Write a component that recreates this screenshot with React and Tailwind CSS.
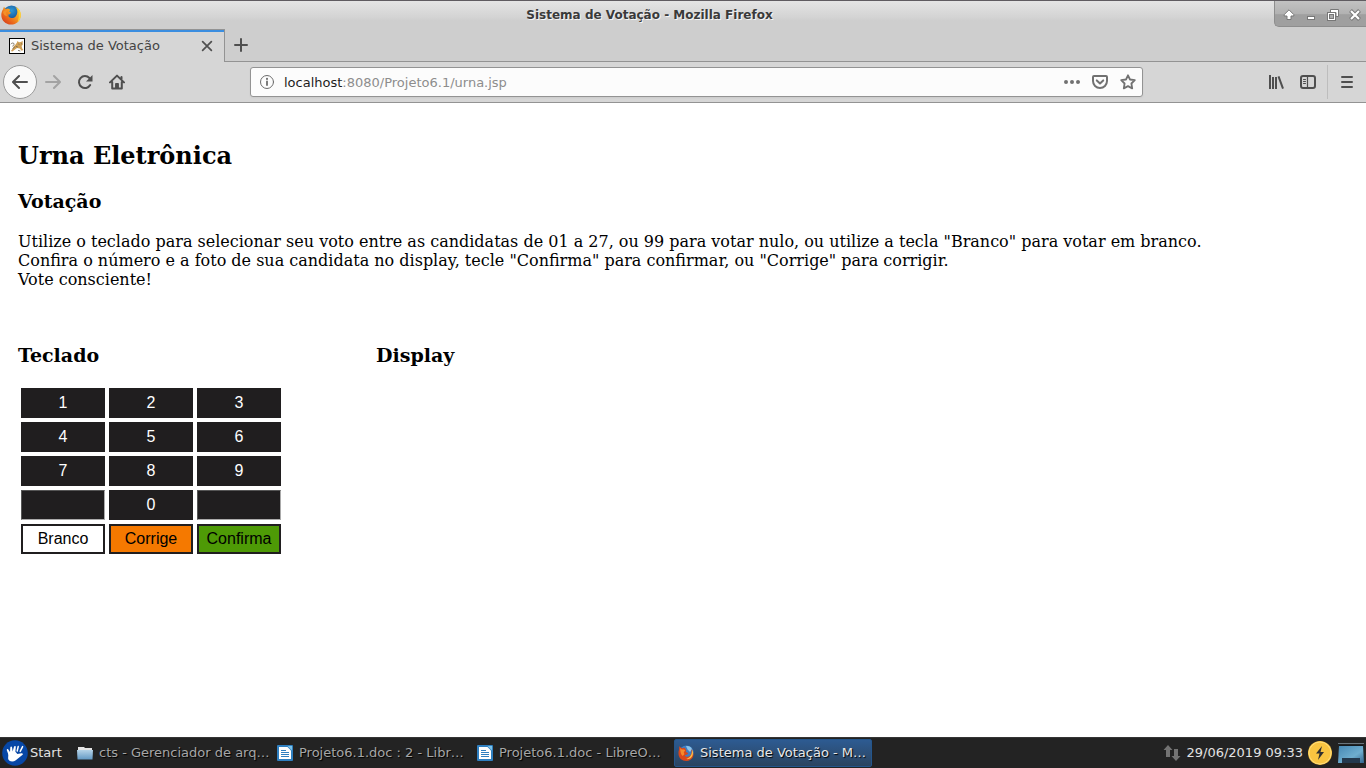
import React from "react";

function FirefoxLogo({ className }) {
  return (
    <svg className={className} viewBox="0 0 20 20" aria-hidden="true">
      <defs>
        <radialGradient id="fxGlobe" cx="50%" cy="30%" r="65%">
          <stop offset="0" stopColor="#2f9bd8" />
          <stop offset="1" stopColor="#0f3f86" />
        </radialGradient>
        <linearGradient id="fxFox" x1="1" y1="0" x2="0" y2="1">
          <stop offset="0" stopColor="#ffe14a" />
          <stop offset="0.35" stopColor="#f8a521" />
          <stop offset="0.7" stopColor="#e8601c" />
          <stop offset="1" stopColor="#c9301a" />
        </linearGradient>
      </defs>
      <circle cx="10.5" cy="9" r="8.6" fill="url(#fxGlobe)" />
      <path
        d="M2 4.2 3 1.8 4.6 4 7 3.6 9.3 4.8 8.2 6.6 10 7.8 8.4 9.4 7.4 9.6 7.6 11.6C9.2 13.6 12.6 13.6 14.6 11.4 16.4 9.2 16.8 6.4 15.8 4.2 15.4 3.2 15 2.6 14.4 2 18 3 19.8 6.4 19.8 10 19.8 15.6 15.4 19.6 10 19.6 4.6 19.6.3 15.4.3 10 .3 7.8 1 5.8 2 4.2Z"
        fill="url(#fxFox)"
      />
      <path d="M16.8 3.4C18.8 5 19.8 7.4 19.8 10c0 3-1.4 5.8-3.4 7.4C18 14 18.6 8 16.8 3.4Z" fill="#fbd23c" />
      <path d="M2 7.2c1-1.6 2.6-2.2 4.4-1.6L5.2 7.8 6 11c-2-.2-3.4-1.6-4-3.8Z" fill="#f5902a" />
    </svg>
  );
}

function FirefoxClassicLogo() {
  return (
    <svg className="size-4 shrink-0" viewBox="0 0 16 16" aria-hidden="true">
      <circle cx="8.4" cy="7.6" r="7.2" fill="#3f7fc4" />
      <path d="M8 1.2c2.6-.6 5 .6 6 3L12 7 9.6 4.4Z" fill="#8cc4ea" />
      <path d="M1.2 1.2 3.8 3.2l2.8-.4 1.8 2.4-.6 1.6 2.6 1.4-1.6 1.6-2 .4c.8 1.8 3.4 2 5 .8 2-1.6 2.2-4.4 1.2-7 2.4 2.2 3 5.4 2 8-1 2.400-3.600 3.900-6.600 3.900C4 15.900.500 13 .500 8.400c0-1.600.100-2.600.600-3.600Z" fill="#d9481c" />
      <path d="m2.200 3 1.600 1.600 2.400-.2 1 1.400L5.800 7l.6 2.200L4.600 11C3 9.600 2 6.600 2.200 3Z" fill="#f58a2c" />
      <path d="M14.200 4.600c1.400 2.800 1 6-1 8-1.400 1.400-3.400 1.800-5 1.400 3.600-.8 6.200-4.400 6-9.400Z" fill="#fbc34a" />
    </svg>
  );
}

function TomcatIcon() {
  return (
    <svg className="size-4 shrink-0" viewBox="0 0 16 16" aria-hidden="true">
      <rect x="0.5" y="0.5" width="15" height="15" fill="#fff" stroke="#000" />
      <path d="M8 4.400 8.400 3 10 4.200 12 4 13.600 2.800 13.800 6.400 12.600 8 13.200 10.400 14.400 12 12.600 12.800 10.800 10.400 8 10 6 11.600 3.400 13.400 1.800 13 3.800 10.800 4.600 8.600 6.400 6.800Z" fill="#d0a055" />
      <path d="M1.800 6.200C2.800 4.600 5 4.600 5.200 6.200L3.600 8.400M3.400 10.800l2.400-1.800M6.800 8.400l2 .6M9.400 6l1 .4M12 5.800h1M9 12.400l2.400.6" fill="none" stroke="#6d6352" strokeWidth="0.8" />
    </svg>
  );
}

function Icon({ children, className = "size-4 text-[#4f4f4f]", width = 2 }) {
  return (
    <svg
      className={className}
      viewBox="0 0 16 16"
      fill="none"
      stroke="currentColor"
      strokeWidth={width}
      strokeLinecap="round"
      strokeLinejoin="round"
      aria-hidden="true"
    >
      {children}
    </svg>
  );
}

function ToolButton({ label, children }) {
  return (
    <button type="button" aria-label={label} className="flex size-8 shrink-0 items-center justify-center">
      {children}
    </button>
  );
}

function TitleBar() {
  return (
    <header className="flex h-[29px] items-start border-t border-[#5f5b60] bg-linear-to-b from-[#e4e4e4] from-0% via-[#d3d3d3] via-60% to-[#cecece] to-70%">
      <FirefoxLogo className="mt-1 ml-px size-5 shrink-0" />
      <h1 className="flex-1 pl-1 text-center text-[12px] leading-7 font-bold text-[#3a3a3a] [text-shadow:1px_1px_0_#f5f5f5]">
        Sistema de Votação - Mozilla Firefox
      </h1>
      <div className="flex h-[26px] w-[92px] shrink-0 items-center justify-between rounded-bl-[5px] border-b border-l border-[#8d8d8d] bg-linear-to-b from-[#c2c2c2] from-0% via-[#b2b2b2] via-50% to-[#9f9f9f] to-55% pt-0.5 pl-[3px]">
        <button type="button" aria-label="Enrolar" className="flex size-[22px] items-center justify-center">
          <svg className="size-3" viewBox="0 0 12 12" aria-hidden="true">
            <path d="M6 .8 10.800 5.600V7H8V10.500H4V7H1.200V5.600Z" fill="#fff" stroke="#777" />
          </svg>
        </button>
        <button type="button" aria-label="Minimizar" className="flex size-[22px] items-center justify-center">
          <svg className="size-3" viewBox="0 0 12 12" aria-hidden="true">
            <rect x="2.5" y="7.5" width="7" height="3" fill="#fff" stroke="#777" />
          </svg>
        </button>
        <button type="button" aria-label="Restaurar" className="flex size-[22px] items-center justify-center">
          <svg className="size-3" viewBox="0 0 12 12" aria-hidden="true">
            <path d="M3.5.5h8v7H9v-4H3.5Z" fill="#fff" stroke="#777" />
            <rect x="0.5" y="3.5" width="8" height="8" fill="#fff" stroke="#777" />
            <rect x="2.5" y="5.5" width="4" height="4" fill="#aaa" stroke="#777" />
          </svg>
        </button>
        <button type="button" aria-label="Fechar" className="flex size-[22px] items-center justify-center">
          <svg className="size-3" viewBox="0 0 12 12" aria-hidden="true">
            <path d="m1.500 1.500 9 9m0-9-9 9" stroke="#777" strokeWidth="4" />
            <path d="m2 2 8 8m0-8-8 8" stroke="#fff" strokeWidth="2.200" />
          </svg>
        </button>
      </div>
    </header>
  );
}

function TabStrip() {
  return (
    <div className="flex h-[33px] bg-[#cecece]">
      <div className="flex w-[225px] items-stretch border-t border-r border-[#939393] bg-[#d6d6d6]">
        <div className="flex w-full items-center border-t-2 border-[#3b8ee0] pr-2 pb-0.5 pl-[9px]">
          <TomcatIcon />
          <span className="flex-1 pl-1.5 text-[13px] leading-4 text-[#444]">Sistema de Votação</span>
          <button type="button" aria-label="Fechar aba" className="flex size-[18px] items-center justify-center">
            <Icon className="size-[14px] text-[#505050]" width={2}>
              <path d="m3 3 10 10M13 3 3 13" />
            </Icon>
          </button>
        </div>
      </div>
      <div className="flex flex-1 items-center border-b border-[#939393]">
        <button type="button" aria-label="Nova aba" className="flex size-8 items-center justify-center">
          <Icon>
            <path d="M8 2v12M2 8h12" />
          </Icon>
        </button>
      </div>
    </div>
  );
}

function NavBar() {
  return (
    <div className="flex h-[41px] items-center border-b border-[#939393] bg-[#d6d6d6] pl-[3px]">
      <button
        type="button"
        aria-label="Voltar"
        className="flex size-[34px] shrink-0 items-center justify-center rounded-full border border-[#9b9b9b] bg-[#f9f9f9]"
      >
        <Icon>
          <path d="M15 8H1.500M7 2 1 8l6 6" />
        </Icon>
      </button>
      <ToolButton label="Avançar">
        <Icon className="size-4 text-[#a3a3a3]">
          <path d="M1 8h13.500M9 2l6 6-6 6" />
        </Icon>
      </ToolButton>
      <ToolButton label="Recarregar">
        <Icon>
          <path d="M13.200 11A6 6 0 1 1 12.400 4" />
          <path d="M15.500 1V7.500H9Z" fill="currentColor" stroke="none" />
        </Icon>
      </ToolButton>
      <ToolButton label="Página inicial">
        <Icon>
          <path d="M1 8.400 8 1.600l7 6.800M3.200 8v6.400h9.600V8M12.500 3v2" />
          <path d="M6.600 14V9.500h2.800V14" fill="currentColor" strokeWidth="1" />
        </Icon>
      </ToolButton>

      <div className="mx-[117px] flex h-[30px] min-w-0 flex-1 items-center rounded-[3px] border border-[#939393] bg-[#fcfcfc] pr-1.5 pl-2 shadow-xs">
        <Icon className="size-4 shrink-0 text-[#6c6c6c]" width={1}>
          <circle cx="8" cy="8" r="6.5" />
          <path d="M8 7.500V11" strokeWidth="1.8" />
          <path d="M8 4.800v.1" strokeWidth="2" />
        </Icon>
        <a href="#urna" aria-label="Endereço" className="min-w-0 flex-1 truncate pt-0.5 pl-[9px] text-[13px] leading-4 text-[#8d8d8d]">
          <span className="text-[#1c1c1c]">localhost</span>:8080/Projeto6.1/urna.jsp
        </a>
        <div className="flex items-center gap-3">
          <button type="button" aria-label="Ações da página">
            <Icon className="size-4 text-[#717171]" width={4}>
              <path d="M2 8h.01M8 8h.01M14 8h.01" />
            </Icon>
          </button>
          <button type="button" aria-label="Salvar no Pocket">
            <Icon className="size-4 text-[#717171]">
              <path d="M2 2h12a1 1 0 0 1 1 1v4A7 7 0 0 1 1 7V3a1 1 0 0 1 1-1Z" />
              <path d="m4.800 6.400 3.200 3 3.200-3" />
            </Icon>
          </button>
          <button type="button" aria-label="Adicionar aos favoritos">
            <Icon className="size-4 text-[#717171]" width={1.8}>
              <path d="m8 1.300 2 4.200 4.800.6-3.400 3.400.8 4.900L8 12.100l-4.200 2.300.8-4.900L1.200 6.100 6 5.500Z" />
            </Icon>
          </button>
        </div>
      </div>

      <ToolButton label="Biblioteca">
        <svg className="size-4 text-[#4f4f4f]" viewBox="0 0 16 16" fill="none" stroke="currentColor" strokeWidth="2" aria-hidden="true">
          <path d="M2 1v14M5 3v12M8 3v12M10.500 2.400 15 14.600" />
        </svg>
      </ToolButton>
      <ToolButton label="Painel lateral">
        <Icon>
          <rect x="1" y="2" width="14" height="12" rx="2" />
          <path d="M7.500 2v12" strokeWidth="1.2" />
          <path d="M3.500 5.500h2M3.500 7.500h2M3.500 9.500h2" strokeWidth="1" />
        </Icon>
      </ToolButton>
      <div className="ml-[3px] flex items-center border-l border-[#bdbdbd] py-px pr-[3px] pl-[3px]">
        <ToolButton label="Abrir menu">
          <Icon>
            <path d="M3 3h10M3 8h10M3 13h10" />
          </Icon>
        </ToolButton>
      </div>
    </div>
  );
}

const keys = ["1", "2", "3", "4", "5", "6", "7", "8", "9", "", "0", ""];

function Keypad() {
  const base = "h-[30px] text-center font-['Liberation_Sans',sans-serif] text-base leading-none";
  return (
    <div className="mt-[22px] ml-[3px] grid w-[260px] grid-cols-3 gap-1">
      {keys.map((key, i) =>
        key ? (
          <button key={i} type="button" className={base + " bg-[#201e1f] text-white"}>
            {key}
          </button>
        ) : (
          <button
            key={i}
            type="button"
            aria-label="Tecla sem função"
            className={base + " border border-t-[#555] border-r-[#aaa] border-b-[#aaa] border-l-[#555] bg-[#201e1f]"}
          />
        )
      )}
      <button type="button" className={base + " border-2 border-[#201e1f] bg-white text-black"}>Branco</button>
      <button type="button" className={base + " border-2 border-[#201e1f] bg-[#f57900] text-black"}>Corrige</button>
      <button type="button" className={base + " border-2 border-[#201e1f] bg-[#4e9a06] text-black"}>Confirma</button>
    </div>
  );
}

function Page() {
  return (
    <main id="urna" className="flex-1 bg-white px-[18px] pt-[39px] pb-6 font-['DejaVu_Serif',serif] text-base leading-[19px] text-black">
      <h2 className="text-2xl leading-7 font-bold">Urna Eletrônica</h2>
      <h3 className="mt-5 text-[19px] leading-[22px] font-bold">Votação</h3>
      <p className="mt-5">
        Utilize o teclado para selecionar seu voto entre as candidatas de 01 a 27, ou 99 para votar nulo, ou utilize a tecla "Branco" para votar em branco.
        <br />
        Confira o número e a foto de sua candidata no display, tecle "Confirma" para confirmar, ou "Corrige" para corrigir.
        <br />
        Vote consciente!
      </p>
      <div className="mt-[55px] flex">
        <section className="w-[358px]">
          <h3 className="text-[19px] leading-[22px] font-bold">Teclado</h3>
          <Keypad />
        </section>
        <section className="flex-1">
          <h3 className="text-[19px] leading-[22px] font-bold">Display</h3>
        </section>
      </div>
    </main>
  );
}

function FolderIcon() {
  return (
    <svg className="size-4 shrink-0" viewBox="0 0 16 16" aria-hidden="true">
      <defs>
        <linearGradient id="folder" x1="0" y1="0" x2="0" y2="1">
          <stop offset="0" stopColor="#b5d3e8" />
          <stop offset="1" stopColor="#6399c4" />
        </linearGradient>
      </defs>
      <path d="M1 2h6l1 1h7v5H1Z" fill="#e5e5e5" />
      <path d="M0 5h16l-.5 9.500H.5Z" fill="url(#folder)" />
    </svg>
  );
}

function WriterIcon() {
  return (
    <svg className="size-4 shrink-0" viewBox="0 0 16 16" aria-hidden="true">
      <rect width="16" height="16" rx="1" fill="#2f7fc0" />
      <path d="M2 2h8.500L14 5.500V14H2Z" fill="#fff" />
      <path d="M10.500 1H15v4.500Z" fill="#7cc3ea" />
      <path d="M4 5.500h5M4 7.500h8M4 9.500h8M4 11.500h8" stroke="#2f7fc0" />
    </svg>
  );
}

const tasks = [
  { title: "cts - Gerenciador de arq…", icon: <FolderIcon /> },
  { title: "Projeto6.1.doc : 2 - Libr…", icon: <WriterIcon /> },
  { title: "Projeto6.1.doc - LibreO…", icon: <WriterIcon /> },
  { title: "Sistema de Votação - M…", icon: <FirefoxClassicLogo />, active: true },
];

function Taskbar() {
  return (
    <footer className="flex h-[31px] items-center border-t border-[#353535] bg-[#232323] text-[13px] leading-4 whitespace-nowrap">
      <button type="button" className="flex w-[74px] shrink-0 items-center gap-0.5 pl-0.5 text-[#e2e2e2]">
        <svg className="size-[26px] shrink-0" viewBox="0 0 26 26" aria-hidden="true">
          <circle cx="13" cy="13" r="12.800" fill="#0747a6" />
          <path d="M6 13.500 4.800 10.300c-.3-1.300 1.200-1.700 1.700-.6L8 12 8.300 7.500c.2-1.200 1.600-1.200 1.800 0l.5 4L12 6.700c.4-1.100 1.900-.8 1.800.4l-.4 4.700 2 2.300 4-.8c1.500-.2 2.100 1 .9 1.800l-6.500 5.200c-2.500 1.800-6.300 1.500-7.400-.7-.8-1.700.4-3.400-.4-6.100Z" fill="#fff" />
          <path d="m15.200 11 1-4.400M18.200 11.400l2.400-4.800" stroke="#fff" strokeWidth="1.500" strokeLinecap="round" />
        </svg>
        Start
      </button>
      <nav className="flex flex-1 gap-0.5">
        {tasks.map((task) => (
          <button
            key={task.title}
            type="button"
            className={
              task.active
                ? "flex h-7 w-[198px] items-center gap-1.5 rounded-[2px] border border-[#24568c] bg-linear-to-b from-[#2d5b92] to-[#2b4460] pl-[3px] text-[#e8e8e8] [text-shadow:1px_1px_1px_#000]"
                : "flex h-7 w-[198px] items-center gap-1.5 pl-[3px] text-[#a6a6a6] [text-shadow:1px_1px_1px_#000]"
            }
          >
            {task.icon}
            {task.title}
          </button>
        ))}
      </nav>
      <div className="flex items-center gap-[5px] pr-0.5 text-[#e2e2e2]">
        <svg className="size-[18px]" viewBox="0 0 18 18" fill="#737373" aria-hidden="true">
          <path d="M5 1 9.500 6H7v7H3V6H.500ZM13 17 8.500 12H11V5h4v7h2.500Z" />
        </svg>
        <time dateTime="2019-06-29T09:33">29/06/2019 09:33</time>
        <svg className="size-6" viewBox="0 0 24 24" aria-hidden="true">
          <circle cx="12" cy="12" r="12" fill="#f9c440" />
          <circle cx="12" cy="12" r="11" fill="none" stroke="#ffdd7d" />
          <path d="m14 5-6 7.500h3.500L10 19l6-8h-3.500Z" fill="#303030" />
        </svg>
        <svg className="ml-px h-[22px] w-[26px]" viewBox="0 0 26 22" aria-hidden="true">
          <defs>
            <linearGradient id="desk" x1="0" y1="0" x2="1" y2="1">
              <stop offset="0" stopColor="#4688b4" />
              <stop offset="0.6" stopColor="#6faecf" />
              <stop offset="1" stopColor="#32658e" />
            </linearGradient>
          </defs>
          <path d="M0 1.500h26" stroke="#68747c" />
          <path d="M1 4h24l1 17H0Z" fill="url(#desk)" />
          <path d="M4 21v-5h18v5Z" fill="#24394d" />
          <path d="M1 3.500h24" stroke="#13191e" />
        </svg>
      </div>
    </footer>
  );
}

export default function App() {
  return (
    <div className="flex min-h-screen flex-col font-['DejaVu_Sans',sans-serif]">
      <TitleBar />
      <TabStrip />
      <NavBar />
      <Page />
      <Taskbar />
    </div>
  );
}
